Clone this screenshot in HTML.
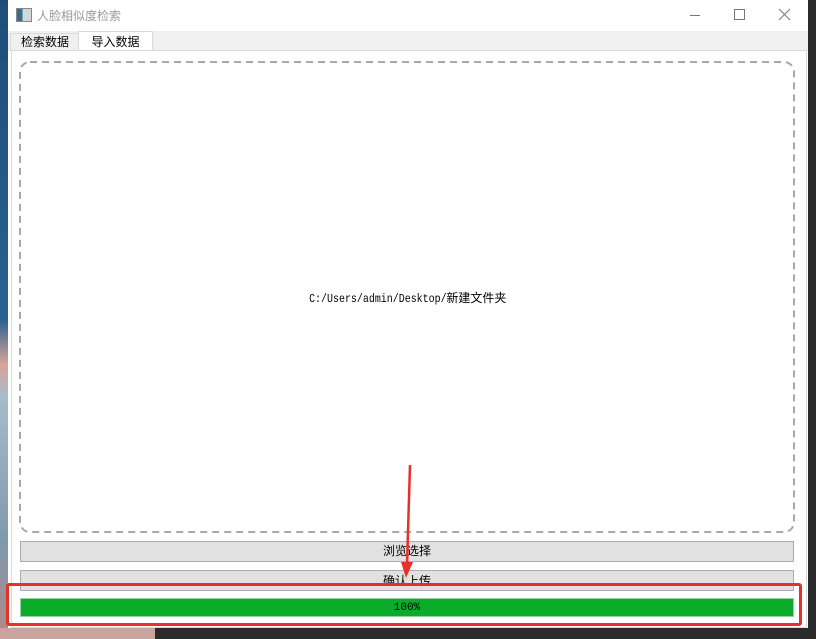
<!DOCTYPE html>
<html><head><meta charset="utf-8"><style>
body{margin:0;width:816px;height:639px;position:relative;overflow:hidden;background:#2b2b2b;font-family:"Liberation Sans","Microsoft YaHei","Noto Sans CJK SC",sans-serif}
.abs{position:absolute}
</style></head><body>
<div class="abs" style="left:0;top:0;width:8px;height:639px;background:linear-gradient(#1f4d78 0%,#2a6090 50%,#d9a498 57%,#a7bccb 62%,#7e98ad 85%,#b08a86 100%)"></div>
<div class="abs" style="left:0;top:628px;width:155px;height:11px;background:#c9a3a0"></div>
<div class="abs" style="left:8px;top:0;width:800px;height:628px;background:#fff"></div>
<div class="abs" style="left:16px;top:8px;width:14px;height:12px;border:1px solid #888;background:linear-gradient(90deg,#3a6c8a 40%,#cfd8dc 40%)"></div>
<div class="abs" style="left:37px;top:7px;font-size:12px;color:#9a9a9a">人脸相似度检索</div>
<div class="abs" style="left:690px;top:15px;width:10px;height:1px;background:#777"></div>
<div class="abs" style="left:734px;top:9px;width:9px;height:9px;border:1px solid #777"></div>
<svg class="abs" style="left:778px;top:8px" width="13" height="13"><path d="M1 1L12 12M12 1L1 12" stroke="#777" stroke-width="1"/></svg>
<div class="abs" style="left:8px;top:31px;width:800px;height:20px;background:#f0f0f0"></div>
<div class="abs" style="left:10px;top:33px;width:68px;height:17px;border:1px solid #d9d9d9;border-bottom:none;background:#f0f0f0;font-size:12px;text-align:center;line-height:17px">检索数据</div>
<div class="abs" style="left:78px;top:31px;width:73px;height:20px;border:1px solid #d9d9d9;border-bottom:none;background:#fff;font-size:12px;text-align:center;line-height:20px">导入数据</div>
<div class="abs" style="left:11px;top:50px;width:794px;height:576px;border:1px solid #d9d9d9;background:#fff"></div>
<svg class="abs" style="left:18px;top:60px" width="780" height="475"><rect x="2" y="2" width="774" height="470" rx="10" fill="none" stroke="#a8a8a8" stroke-width="2" stroke-dasharray="7,5"/></svg>
<div class="abs" style="left:20px;top:290px;width:775px;text-align:center;font-size:12px;line-height:16px"><span style="font-family:'Liberation Mono',monospace;font-size:12px;display:inline-block;transform:scaleX(0.83);margin:0 -14px">C:/Users/admin/Desktop/</span><span style="font-family:'Noto Sans CJK SC',sans-serif">新建文件夹</span></div>
<div class="abs" style="left:20px;top:541px;width:772px;height:19px;border:1px solid #adadad;background:#e1e1e1;font-size:12px;text-align:center;line-height:19px">浏览选择</div>
<div class="abs" style="left:20px;top:570px;width:772px;height:19px;border:1px solid #adadad;background:#e1e1e1;font-size:12px;text-align:center;line-height:21px">确认上传</div>
<div class="abs" style="left:20px;top:598px;width:774px;height:19px;background:#09ad29;border:1px solid #9ad0a4;box-sizing:border-box;font-size:11px;text-align:center;line-height:18px;font-family:'Liberation Mono',monospace">100%</div>
<div class="abs" style="left:6px;top:583px;width:790px;height:37px;border:3px solid #e8302a;border-radius:3px"></div>
<svg class="abs" style="left:398px;top:460px" width="20" height="125"><path d="M12 5L9 105" stroke="#e8302a" stroke-width="2.5"/><path d="M3 102L15 102L8 118Z" fill="#e8302a"/></svg>
</body></html>
